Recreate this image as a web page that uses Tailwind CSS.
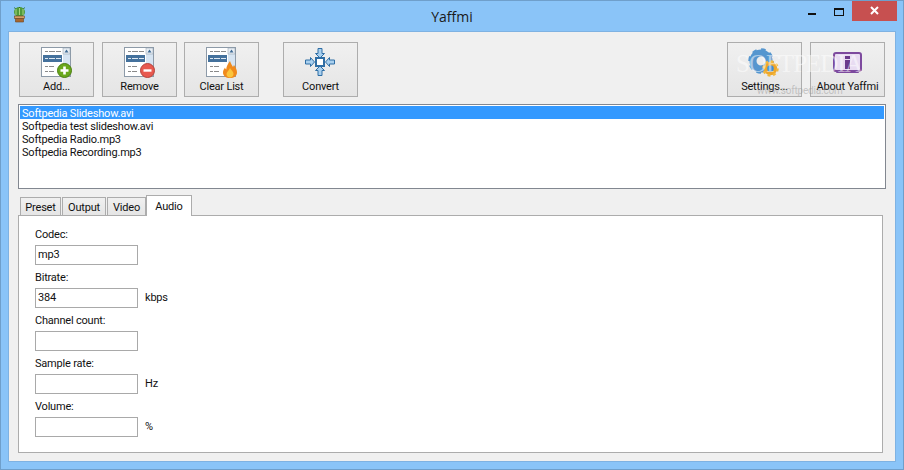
<!DOCTYPE html>
<html>
<head>
<meta charset="utf-8">
<script src="https://cdn.jsdelivr.net/npm/@tailwindcss/browser@4"></script>
</head>
<body class="m-0 bg-[#8ac4f8]">
<svg width="0" height="0" class="absolute">
  <defs>
    <symbol id="lst" viewBox="0 0 30 30">
      <rect x="0.5" y="0.5" width="29" height="29" fill="#fff" stroke="#8d9aa8"/>
      <rect x="22" y="1" width="7" height="28" fill="#d6e4f2"/>
      <rect x="22" y="1" width="7" height="6" fill="#e8eef4" stroke="#8d9aa8" stroke-width="0.5"/>
      <path d="M23.500 5.500h4l-2-3z" fill="#3e6a94"/>
      <rect x="2" y="8" width="19" height="7" fill="#44719c"/>
      <path d="M4 4.500h3M8 4.500h6M15 4.500h5M4 19.500h3M8 19.500h5M4 24.500h3M8 24.500h5" stroke="#8a8a8a"/>
      <path d="M4 11.500h3M8 11.500h6M15 11.500h5" stroke="#dfe9f3"/>
    </symbol>
  </defs>
</svg>
<div class="relative w-[904px] h-[470px] overflow-hidden border border-[#6f9fcb] font-['Roboto',sans-serif] text-[11px] tracking-[-0.2px] text-[#111]">
  <header class="relative h-[30px] flex items-center justify-center">
    <svg class="absolute left-[12px] top-[6px]" width="13" height="16" viewBox="0 0 13 16">
      <ellipse cx="6.500" cy="5" rx="5.500" ry="5" fill="#4f9a3c"/>
      <path d="M3 2v6M6.500 1v7M10 2v6" stroke="#a5d47f"/>
      <path d="M1.500 0.500l1 1.500M11.500 0.500l-1 1.500M6.500 0v1" stroke="#2d6e25"/>
      <rect x="1.500" y="9" width="10" height="2.500" fill="#d3a06a" stroke="#6d4420" stroke-width="0.600"/>
      <path d="M2.500 11.500h8v3.500h-8z" fill="#a8672f" stroke="#6d4420" stroke-width="0.600"/>
    </svg>
    <span class="font-['Open_Sans',sans-serif] text-[14px] tracking-normal text-[#1a1a1a]">Yaffmi</span>
    <div class="absolute right-[6px] top-[-1px] flex items-start">
      <div class="w-[8px] h-[2px] mt-[13px] bg-[#111] mr-[18px]"></div>
      <div class="w-[10px] h-[8px] mt-[8px] border border-[#111] border-t-2 mr-[8px]"></div>
      <div class="w-[45px] h-[21px] bg-[#c75050] flex items-center justify-center">
        <svg width="9" height="9" viewBox="0 0 9 9"><path d="M1 1l7 7M8 1l-7 7" stroke="#fff" stroke-width="2"/></svg>
      </div>
    </div>
  </header>

  <main class="relative mx-[7px] h-[431px] bg-[#f0f0f0] border border-[#7fb2e2] px-[9px] pt-[10px]">
    <div class="flex h-[55px] mx-[1px]">
      <button class="w-[75px] h-[55px] border border-[#adadad] bg-gradient-to-b from-[#f0f0f0] to-[#e5e5e5] flex flex-col items-center">
        <span class="relative block w-[30px] h-[30px] mt-[4px] mr-[1px]">
          <svg class="block" width="30" height="30"><use href="#lst"/></svg>
          <svg class="absolute left-[16px] top-[16px]" width="15" height="15" viewBox="0 0 15 15"><circle cx="7.500" cy="7.500" r="7" fill="#6aa81c" stroke="#4b7f10"/><path d="M7.500 3.500v8M3.500 7.500h8" stroke="#fff" stroke-width="2.600"/></svg>
        </span>
        <span class="mt-[3px] leading-[14px]">Add...</span>
      </button>
      <button class="ml-[8px] w-[75px] h-[55px] border border-[#adadad] bg-gradient-to-b from-[#f0f0f0] to-[#e5e5e5] flex flex-col items-center">
        <span class="relative block w-[30px] h-[30px] mt-[4px] mr-[1px]">
          <svg class="block" width="30" height="30"><use href="#lst"/></svg>
          <svg class="absolute left-[16px] top-[16px]" width="15" height="15" viewBox="0 0 15 15"><circle cx="7.500" cy="7.500" r="7" fill="#e8594f" stroke="#b5433b"/><path d="M3.500 7.500h8" stroke="#fff" stroke-width="2.400"/></svg>
        </span>
        <span class="mt-[3px] leading-[14px]">Remove</span>
      </button>
      <button class="ml-[7px] w-[75px] h-[55px] border border-[#adadad] bg-gradient-to-b from-[#f0f0f0] to-[#e5e5e5] flex flex-col items-center">
        <span class="relative block w-[30px] h-[30px] mt-[4px] mr-[1px]">
          <svg class="block" width="30" height="30"><use href="#lst"/></svg>
          <svg class="absolute left-[17px] top-[14px]" width="14" height="17" viewBox="0 0 14 17"><path d="M7 0c1 3 2 4 3 6 .5-1 .8-1.500 1-2 2 3 3 5 3 7.500C14 15 11 17 7 17S0 15 0 11.500c0-2 1-3.500 2-5 .3 1 .6 1.500 1.200 2C3.500 5 5 3 7 0z" fill="#f08a1c"/><path d="M7 7c1 2 3.500 3.500 3.500 6 0 2-1.500 3.500-3.500 3.500S3.500 15 3.500 13C3.500 11 6 9.500 7 7z" fill="#fbc53c"/></svg>
        </span>
        <span class="mt-[3px] leading-[14px]">Clear List</span>
      </button>
      <button class="ml-[24px] w-[75px] h-[55px] border border-[#adadad] bg-gradient-to-b from-[#f0f0f0] to-[#e5e5e5] flex flex-col items-center">
        <svg class="mt-[4px] mr-[1px] block" width="30" height="30" viewBox="1 0 30 30">
          <g fill="#a9d0ef" stroke="#2f6ea5">
            <path d="M14 1.500h4v5h2.500l-4.500 4.500-4.500-4.500H14z"/>
            <path d="M14 28.500h4v-5h2.500l-4.500-4.500-4.500 4.500H14z"/>
            <path d="M1.500 13h5v-2.500l4 4.500-4 4.500V17h-5z"/>
            <path d="M30.500 13h-5v-2.500l-4 4.500 4 4.500V17h5z"/>
          </g>
          <rect x="12" y="11" width="8" height="8" fill="#fff" stroke="#2f6ea5" stroke-width="2"/>
        </svg>
        <span class="mt-[3px] leading-[14px]">Convert</span>
      </button>
      <button class="ml-auto w-[75px] h-[55px] border border-[#adadad] bg-gradient-to-b from-[#f0f0f0] to-[#e5e5e5] flex flex-col items-center">
        <span class="relative block w-[32px] h-[30px] mt-[4px] mr-[1px]">
          <svg class="absolute left-[0px] top-[1px]" width="26" height="26" viewBox="0 0 26 26"><circle cx="13" cy="13" r="8" fill="none" stroke="#5596cf" stroke-width="7"/><circle cx="13" cy="13" r="11" fill="none" stroke="#5596cf" stroke-width="3.500" stroke-dasharray="4.300 4.300"/></svg>
          <svg class="absolute left-[14px] top-[13px]" width="17" height="17" viewBox="0 0 17 17"><circle cx="8.500" cy="8.500" r="5" fill="#3f8fd4" stroke="#eda62a" stroke-width="3.500"/><circle cx="8.500" cy="8.500" r="7" fill="none" stroke="#f2b63c" stroke-width="2.500" stroke-dasharray="2.800 2.700"/></svg>
        </span>
        <span class="mt-[3px] leading-[14px]">Settings...</span>
      </button>
      <button class="ml-[8px] w-[75px] h-[55px] border border-[#adadad] bg-gradient-to-b from-[#f0f0f0] to-[#e5e5e5] flex flex-col items-center">
        <svg class="mt-[9px] block" width="29" height="23" viewBox="0 0 29 23">
          <rect x="1" y="1" width="27" height="18" rx="2" fill="#e8dcf2" stroke="#7d4a9e" stroke-width="2"/>
          <rect x="3" y="18" width="23" height="3" rx="1" fill="#7d4a9e"/>
          <rect x="12" y="4" width="5" height="3" fill="#6b3a8c"/><rect x="12" y="8" width="5" height="9" fill="#6b3a8c"/>
        </svg>
        <span class="mt-[5px] leading-[14px]">About Yaffmi</span>
      </button>
    </div>

    <div class="mt-[7px] h-[85px] border border-[#828790] bg-white p-[1px]">
      <div class="h-[13px] leading-[15px] px-[2px] bg-[#3399ff] text-white">Softpedia Slideshow.avi</div>
      <div class="h-[13px] leading-[15px] px-[2px]">Softpedia test slideshow.avi</div>
      <div class="h-[13px] leading-[15px] px-[2px]">Softpedia Radio.mp3</div>
      <div class="h-[13px] leading-[15px] px-[2px]">Softpedia Recording.mp3</div>
    </div>

    <div class="relative flex items-end h-[21px] mt-[5px] pl-[2px] z-10">
      <div class="w-[41px] h-[18px] border border-b-0 border-[#acacac] bg-gradient-to-b from-[#f0f0f0] to-[#e5e5e5] text-center leading-[20px]">Preset</div>
      <div class="w-[44px] h-[18px] ml-[1px] border border-b-0 border-[#acacac] bg-gradient-to-b from-[#f0f0f0] to-[#e5e5e5] text-center leading-[20px]">Output</div>
      <div class="w-[39px] h-[18px] ml-[1px] border border-b-0 border-[#acacac] bg-gradient-to-b from-[#f0f0f0] to-[#e5e5e5] text-center leading-[20px]">Video</div>
      <div class="w-[46px] h-[21px] mb-[-1px] border border-b-0 border-[#acacac] bg-white text-center leading-[21px]">Audio</div>
    </div>
    <div class="w-[865px] h-[238px] border border-[#acacac] bg-white pl-[16px] pt-[10px]">
      <div class="h-[15px] leading-[17px]">Codec:</div>
      <div class="mt-[4px] h-[20px] flex items-center">
        <div class="w-[103px] h-[20px] border border-[#a9a9a9] bg-white px-[2px] leading-[18px]">mp3</div>
      </div>
      <div class="mt-[4px] h-[15px] leading-[17px]">Bitrate:</div>
      <div class="mt-[4px] h-[20px] flex items-center">
        <div class="w-[103px] h-[20px] border border-[#a9a9a9] bg-white px-[2px] leading-[18px]">384</div><span class="ml-[7px]">kbps</span>
      </div>
      <div class="mt-[4px] h-[15px] leading-[17px]">Channel count:</div>
      <div class="mt-[4px] h-[20px] flex items-center">
        <div class="w-[103px] h-[20px] border border-[#a9a9a9] bg-white"></div>
      </div>
      <div class="mt-[4px] h-[15px] leading-[17px]">Sample rate:</div>
      <div class="mt-[4px] h-[20px] flex items-center">
        <div class="w-[103px] h-[20px] border border-[#a9a9a9] bg-white"></div><span class="ml-[7px]">Hz</span>
      </div>
      <div class="mt-[4px] h-[15px] leading-[17px]">Volume:</div>
      <div class="mt-[4px] h-[20px] flex items-center">
        <div class="w-[103px] h-[20px] border border-[#a9a9a9] bg-white"></div><span class="ml-[7px]">%</span>
      </div>
    </div>
  </main>

  <div class="absolute left-[735px] top-[50px] font-['Liberation_Serif',serif] text-[25px] leading-[26px] tracking-[-1px] text-white/50">SOFTPEDIA</div>
  <div class="absolute left-[756px] top-[84px] text-[10px] leading-[12px] text-[#999]/50">www.softpedia.com</div>
</div>
</body>
</html>
